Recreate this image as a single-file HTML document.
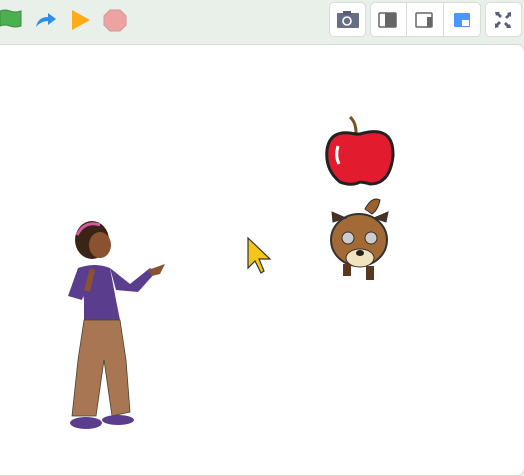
<!DOCTYPE html>
<html><head><style>
body{margin:0;width:524px;height:435px;overflow:hidden;background:#e8f0e9;font-family:"Liberation Sans",sans-serif;position:relative}
.btn{position:absolute;top:2px;height:35px;background:#fff;border:1px solid #d8dcd9;border-radius:5px;box-sizing:border-box}
.stage{position:absolute;left:-10px;top:44px;width:533px;height:430px;background:#fff;border:1px solid #d6dad7;border-radius:8px}
</style></head><body>
<svg style="position:absolute;left:0;top:6px" width="140" height="28">
<path d="M0 5 Q5 3 10 5 Q15 7 21 5 L21 20 Q15 22 10 20 Q5 18 0 20Z" fill="#4caf50" stroke="#3d8b40" stroke-width="1"/>
<path d="M36 21 Q38 11 48 11 L48 7 L56 13 L48 19 L48 15 Q41 15 36 21Z" fill="#2f8fe8"/>
<path d="M72 4 L90 14 L72 24Z" fill="#ffab19"/>
<path d="M110 4 L120 4 L126 10 L126 19 L120 25 L110 25 L104 19 L104 10Z" fill="#eea3a3" stroke="#d89393"/>
</svg>
<div class="btn" style="left:329px;width:37px"></div>
<svg style="position:absolute;left:336px;top:10px" width="24" height="20"><rect x="1" y="3" width="22" height="15" rx="1" fill="#575e75" opacity=".9"/><rect x="7" y="1" width="8" height="4" fill="#575e75"/><circle cx="11" cy="11" r="4" fill="none" stroke="#fff" stroke-width="1.6"/></svg>
<div class="btn" style="left:370px;width:111px"></div>
<div style="position:absolute;left:406px;top:3px;width:1px;height:33px;background:#d8dcd9"></div>
<div style="position:absolute;left:443px;top:3px;width:1px;height:33px;background:#d8dcd9"></div>
<svg style="position:absolute;left:378px;top:12px" width="100" height="16">
<rect x="1" y="1" width="17" height="14" rx="1" fill="none" stroke="#666" stroke-width="1.5"/><rect x="7" y="1" width="11" height="14" fill="#666"/>
<rect x="38" y="1" width="16" height="14" rx="1" fill="none" stroke="#666" stroke-width="1.5"/><rect x="49" y="5" width="5" height="10" fill="#666"/>
<rect x="76" y="1" width="16" height="14" rx="1" fill="#4c97ff"/><rect x="84" y="8" width="7" height="6" fill="#fff"/>
</svg>
<div class="btn" style="left:485px;width:37px"></div>
<svg style="position:absolute;left:495px;top:12px" width="16" height="16" fill="#575e75"><path d="M0 0h5l-1 1 3 3-2 2-3-3-1 1zM16 0v5l-1-1-3 3-2-2 3-3-1-1zM0 16v-5l1 1 3-3 2 2-3 3 1 1zM16 16h-5l1-1-3-3 2-2 3 3 1-1z"/></svg>
<div class="stage"></div>
<svg style="position:absolute;left:0;top:0" width="524" height="435">
<path d="M356 133 Q356 122 350 117" stroke="#7a5020" stroke-width="3" fill="none"/>
<path d="M360 134 Q394 124 393 156 Q390 184 370 184 Q360 181 358 183 Q350 186 340 182 Q325 170 327 150 Q330 128 356 134Z" fill="#e21b2f" stroke="#222" stroke-width="3"/>
<path d="M338 146 Q335 156 339 164" stroke="#fff" stroke-width="3" fill="none"/>
<path d="M365 209 Q372 196 380 200 Q378 210 372 214Z" fill="#9b6230" stroke="#333"/>
<ellipse cx="359" cy="240" rx="28" ry="26" fill="#a36a35" stroke="#333" stroke-width="2"/>
<path d="M333 222 L332 212 L346 218Z" fill="#4a3020" stroke="#333"/><path d="M386 222 L388 212 L374 218Z" fill="#4a3020" stroke="#333"/>
<circle cx="348" cy="238" r="6" fill="#ccc" stroke="#333"/><circle cx="371" cy="238" r="6" fill="#ccc" stroke="#333"/>
<ellipse cx="360" cy="258" rx="14" ry="9" fill="#f1e2c0" stroke="#333"/><ellipse cx="360" cy="253" rx="4" ry="3" fill="#222"/>
<rect x="343" y="264" width="8" height="12" fill="#5a3820"/><rect x="366" y="266" width="8" height="14" fill="#5a3820"/>
<path d="M248 238 L248 268 L255 261 L261 273 L264 271 L259 259 L270 259Z" fill="#f5c518" stroke="#333" stroke-width="1.2"/>
<ellipse cx="92" cy="240" rx="17" ry="19" fill="#3a2416"/>
<ellipse cx="100" cy="245" rx="11" ry="13" fill="#8a5230"/>
<path d="M77 235 Q85 220 100 225" stroke="#d45aa0" stroke-width="3" fill="none"/>
<path d="M78 268 Q95 262 110 268 L116 300 L120 320 L84 322 L84 300Z" fill="#5a3d8c"/>
<path d="M78 268 L68 296 L82 300 L90 275Z" fill="#5a3d8c"/>
<path d="M84 290 L90 268 L95 270 L90 292Z" fill="#8a5230"/>
<path d="M110 268 L130 284 L150 268 L156 272 L138 292 L116 290Z" fill="#5a3d8c"/>
<path d="M148 270 L165 264 L160 274 L152 276Z" fill="#8a5230"/>
<path d="M84 320 L120 320 L126 360 L130 412 L112 416 L104 360 L96 416 L72 416 L78 360Z" fill="#a87652" stroke="#443" stroke-width=".8"/>
<ellipse cx="86" cy="423" rx="16" ry="6" fill="#5a3d8c"/><ellipse cx="118" cy="420" rx="16" ry="5" fill="#5a3d8c"/>
</svg>
</body></html>
